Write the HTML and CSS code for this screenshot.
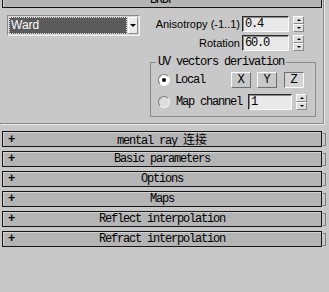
FILE: index.html
```html
<!DOCTYPE html>
<html>
<head>
<meta charset="utf-8">
<title>BRDF</title>
<link rel="stylesheet" href="styles.css">
</head>
<body>
<div class="rollout open">
  <div class="bar"><span class="sign">-</span><span class="title">BRDF</span><span></span></div>
  <div class="body">
    <div class="left">
      <div class="combo"><div class="sel">Ward</div><div class="drop"><i class="tri"></i></div></div>
    </div>
    <div class="right">
      <div class="row">
        <span class="lbl">Anisotropy (-1..1)</span>
        <div class="num">0.4</div>
        <div class="arrows"><span><i class="up"></i></span><span><i class="dn"></i></span></div>
      </div>
      <div class="row row2">
        <span class="lbl">Rotation</span>
        <div class="num">60.0</div>
        <div class="arrows"><span><i class="up"></i></span><span><i class="dn"></i></span></div>
      </div>
      <fieldset class="group">
        <legend>UV vectors derivation</legend>
        <div class="opt">
          <span class="radio on"></span><span class="otext local">Local</span>
          <span class="btn">X</span><span class="btn">Y</span><span class="btn down">Z</span>
        </div>
        <div class="opt opt2">
          <span class="radio"></span><span class="otext chan">Map channel</span>
          <div class="num small">1</div>
          <div class="arrows"><span><i class="up"></i></span><span><i class="dn"></i></span></div>
        </div>
      </fieldset>
    </div>
  </div>
</div>

<div class="roll first"><div class="bar"><span class="sign">+</span><span class="title">mental ray <span class="cjk">连接</span></span><span></span></div></div>
<div class="roll"><div class="bar"><span class="sign">+</span><span class="title">Basic parameters</span><span></span></div></div>
<div class="roll"><div class="bar"><span class="sign">+</span><span class="title">Options</span><span></span></div></div>
<div class="roll"><div class="bar"><span class="sign">+</span><span class="title">Maps</span><span></span></div></div>
<div class="roll"><div class="bar"><span class="sign">+</span><span class="title">Reflect interpolation</span><span></span></div></div>
<div class="roll"><div class="bar"><span class="sign">+</span><span class="title">Refract interpolation</span><span></span></div></div>
</body>
</html>
```

FILE: styles.css
```css
*{margin:0;padding:0;box-sizing:border-box;}
body{background:#c8c8c8;width:329px;height:292px;overflow:hidden;font-family:"Liberation Sans",Arial,sans-serif;font-size:11px;color:#000;}

/* rollout bars */
.bar{margin-left:2px;width:320px;height:16px;border:1px solid #161616;background:#b4b4b4;box-shadow:inset 1px 1px 0 #d2d2d2;display:grid;grid-template-columns:20px 1fr 20px;align-items:center;font-family:"Liberation Mono","Noto Sans CJK SC",monospace;font-size:12px;letter-spacing:-1.2px;line-height:14px;}
.sign{padding-left:5px;font-weight:bold;}
.title{text-align:center;white-space:nowrap;}
.cjk{font-family:"Noto Sans CJK SC",sans-serif;letter-spacing:0;font-size:12px;}

.open{width:324px;margin-top:-8px;border-right:1px solid #8a8a8a;border-bottom:1px solid #8a8a8a;box-shadow:1px 1px 0 #ececec;}
.open .body{display:flex;height:115px;}
.roll{display:flex;align-items:center;width:326px;margin-top:4px;}
.roll.first{margin-top:7px;}
.roll:after{content:"";display:block;width:2px;height:11px;margin-left:1px;border:1px solid #7c7c7c;border-left:none;}

/* left column */
.left{width:150px;padding:7px 0 0 7px;}
.combo{display:flex;width:133px;height:21px;border:1px solid;border-color:#8a8a8a #f4f4f4 #f4f4f4 #8a8a8a;padding:1px;background:#d8d8d8;}
.sel{flex:1;margin-right:1px;background:#5a5a5a;color:#fff;border:1px dotted #e0e0e0;padding-left:1px;line-height:15px;font-size:12px;}
.drop{width:10px;background:#ececec;border:1px solid;border-color:#fff #8a8a8a #8a8a8a #fff;display:flex;align-items:center;justify-content:center;}
.tri{display:block;border-left:3px solid transparent;border-right:3px solid transparent;border-top:3px solid #000;}

/* right column */
.right{width:166px;padding-top:8px;}
.row{display:flex;align-items:center;justify-content:flex-end;height:16px;padding-right:12px;}
.row2{margin-top:3px;}
.lbl{margin-right:2px;white-space:nowrap;}
.num{width:47px;height:16px;border:1px solid;border-color:#2a2a2a #fafafa #fafafa #2a2a2a;box-shadow:inset 1px 1px 0 #8a8a8a;background:#e9e9e9;padding-left:2px;font-family:"Liberation Mono",monospace;font-size:12px;letter-spacing:-1.2px;line-height:14px;}
.num.small{width:44px;}
.arrows{width:11px;height:16px;margin-left:4px;display:flex;flex-direction:column;}
.arrows span{flex:1;background:#dedede;border:1px solid;border-color:#fff #8a8a8a #8a8a8a #fff;display:flex;align-items:center;justify-content:center;}
.up{display:block;border-left:2px solid transparent;border-right:2px solid transparent;border-bottom:2px solid #000;}
.dn{display:block;border-left:2px solid transparent;border-right:2px solid transparent;border-top:2px solid #000;}

/* group box */
.group{margin-top:5px;width:166px;border:1px solid #8c8c8c;padding:0 0 6px 0;min-width:0;}
.group legend{margin-left:5px;padding:0 2px;font-family:"Liberation Mono",monospace;font-size:12px;letter-spacing:-1.2px;line-height:12px;}
.opt{display:flex;align-items:center;height:16px;margin-top:4px;padding-left:7px;font-family:"Liberation Mono",monospace;font-size:12px;letter-spacing:-1.2px;}
.opt2{margin-top:6px;}
.radio{width:12px;height:12px;border-radius:50%;border:1px solid;border-color:#7a7a7a #f4f4f4 #f4f4f4 #7a7a7a;background:#fff;display:flex;align-items:center;justify-content:center;}
.radio.on:after{content:"";width:4px;height:4px;border-radius:50%;background:#000;}
.opt2 .radio{background:#dcdcdc;}
.otext{white-space:nowrap;}
.local{margin-left:5px;width:56px;}
.chan{margin-left:6px;width:72px;}
.btn{width:20px;height:16px;margin-right:6px;border:1px solid;border-color:#fafafa #6e6e6e #6e6e6e #fafafa;text-align:center;line-height:14px;letter-spacing:0;}
.btn.down{border-color:#6e6e6e #fafafa #fafafa #6e6e6e;background:#d4d4d4;margin-left:1px;}
```
